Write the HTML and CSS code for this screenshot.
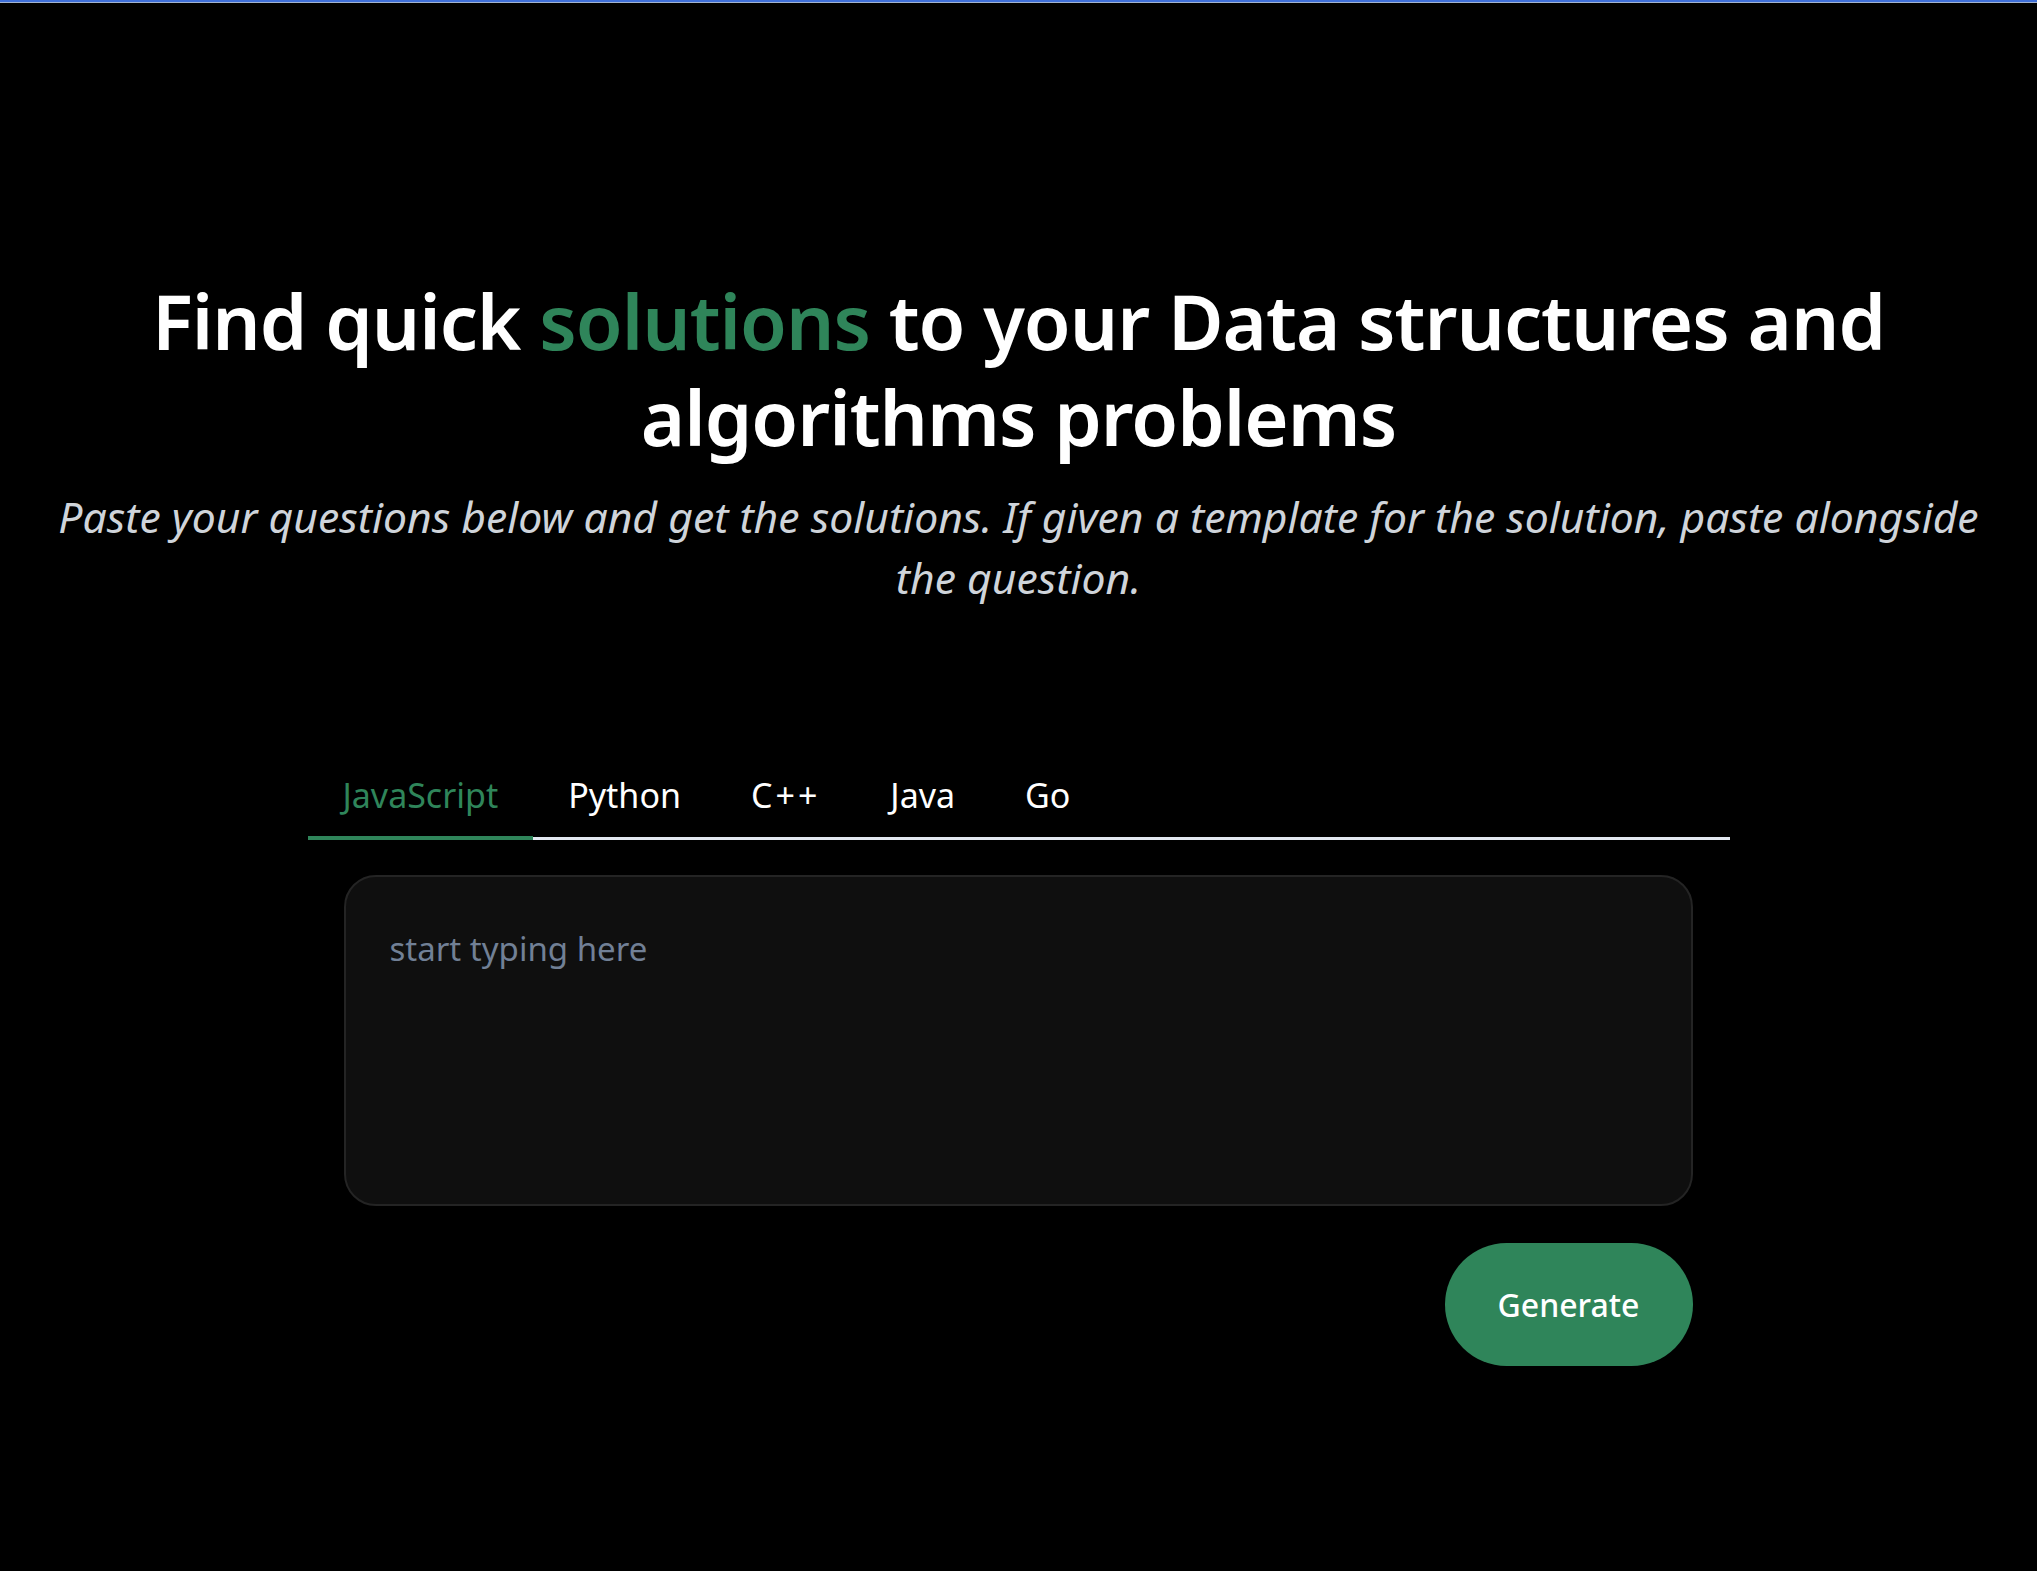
FILE: index.html
```html
<!DOCTYPE html>
<html lang="en">
<head>
<meta charset="utf-8">
<title>DSA Solutions</title>
<link rel="stylesheet" href="styles.css">
</head>
<body>
<div class="topbar"></div>
<main class="page">
  <header class="hero">
    <h1 class="title">Find quick <span class="accent">solutions</span> to your Data structures and algorithms problems</h1>
    <p class="subtitle">Paste your questions below and get the solutions. If given a template for the solution, paste alongside the question.</p>
  </header>
  <section class="tabs">
    <div class="tablist">
      <button class="tab active">JavaScript</button>
      <button class="tab">Python</button>
      <button class="tab tab-wide">C++</button>
      <button class="tab">Java</button>
      <button class="tab">Go</button>
    </div>
    <div class="panel">
      <textarea class="editor" placeholder="start typing here"></textarea>
      <div class="actions"><button class="generate">Generate</button></div>
    </div>
  </section>
</main>
</body>
</html>
```
FILE: styles.css
```css
body {
  margin: 0;
  background: #000;
  color: #fff;
  font-family: "Noto Sans", "Open Sans", sans-serif;
}
.topbar {
  height: 2px;
  background: #3f6fd8;
  border-bottom: 1px solid #a3b4d0;
}
.hero {
  padding: 270px 48px 0;
  text-align: center;
}
.title {
  margin: 0;
  font-size: 76px;
  line-height: 96px;
  font-weight: 600;
  letter-spacing: -1px;
}
.accent {
  color: #2f855a;
}
.subtitle {
  margin: 21px 0 0;
  font-size: 42.7px;
  line-height: 61px;
  font-style: italic;
  color: #cfd4da;
}
.tabs {
  width: 1422px;
  margin: 142px auto 0;
}
.tablist {
  display: flex;
  border-bottom: 3px solid #e2e8f0;
}
.tab {
  background: none;
  border: none;
  border-bottom: 4px solid transparent;
  margin-bottom: -3px;
  padding: 21px 35px 15px;
  font: inherit;
  font-size: 34px;
  line-height: 49.5px;
  color: #fff;
}
.tab-wide {
  letter-spacing: 3px;
}
.tab.active {
  color: #2f855a;
  border-bottom-color: #2f855a;
}
.panel {
  padding: 35px 37px 35px 36px;
  display: flex;
  flex-direction: column;
  gap: 37px;
}
.editor {
  display: block;
  height: 331px;
  box-sizing: border-box;
  padding: 49px 44px;
  border: 2px solid #242424;
  border-radius: 32px;
  background: #0f0f0f;
  color: #fff;
  font: inherit;
  font-size: 33px;
  line-height: 1.375;
  resize: none;
  outline: none;
}
.editor::placeholder {
  color: #718096;
}
.actions {
  display: flex;
  justify-content: flex-end;
}
.generate {
  width: 248px;
  height: 123px;
  border: none;
  border-radius: 62px;
  background: #2f855a;
  color: #fff;
  font: inherit;
  font-size: 32px;
  font-weight: 500;
}
```
